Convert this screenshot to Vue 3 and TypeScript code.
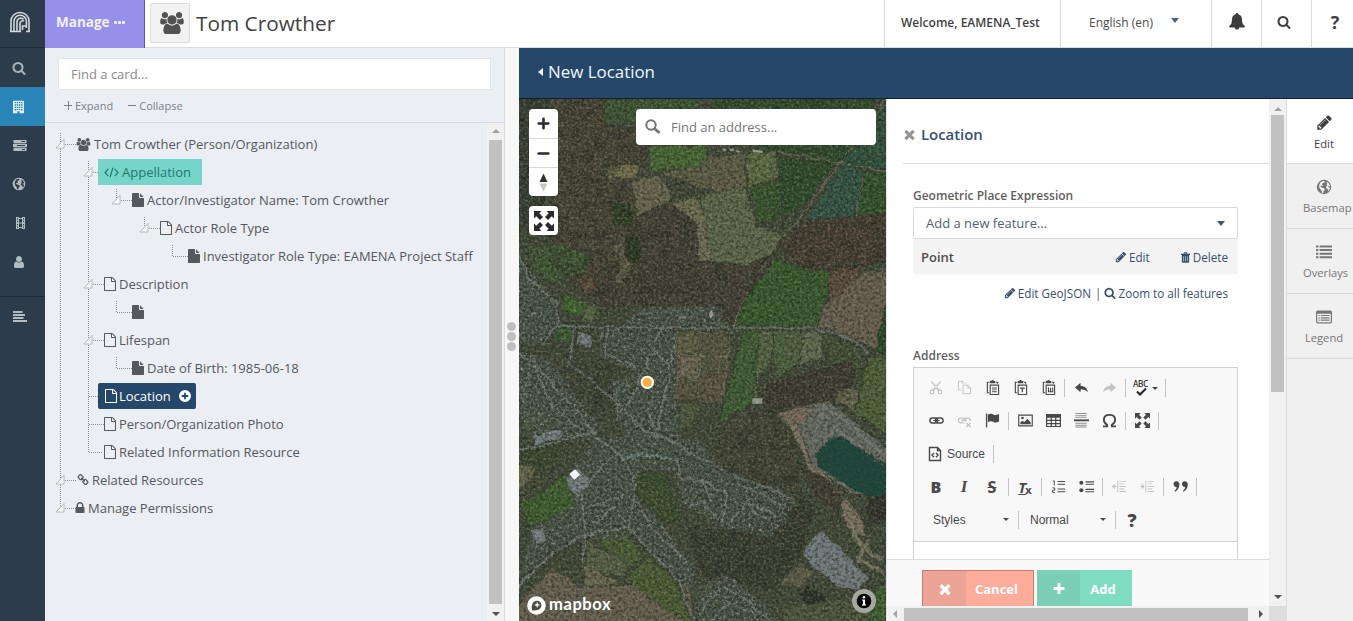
<script setup lang="ts">
interface Glyph { box: string; body: string }
const p = (d: string): string => `<path d="${d}"/>`
const fa = (d: string): Glyph => ({ box: '0 0 1792 1792', body: p(d) })

const glyphs: Record<string, Glyph> = {
  search: fa('M1216 832q0-185-131.5-316.5t-316.5-131.5-316.5 131.5-131.5 316.5 131.5 316.5 316.5 131.5 316.5-131.5 131.5-316.5zm512 832q0 52-38 90t-90 38q-54 0-90-38l-343-342q-179 124-399 124-143 0-273.5-55.5t-225-150-150-225-55.5-273.5 55.5-273.5 150-225 225-150 273.5-55.5 273.5 55.5 225 150 150 225 55.5 273.5q0 220-124 399l343 343q37 37 37 90z'),
  file: fa('M1152 512v-472q22 14 36 28l408 408q14 14 28 36h-472zm-128 32q0 40 28 68t68 28h544v1056q0 40-28 68t-68 28h-1344q-40 0-68-28t-28-68v-1600q0-40 28-68t68-28h800v544z'),
  fileo: fa('M1596 380q28 28 48 76t20 88v1152q0 40-28 68t-68 28h-1344q-40 0-68-28t-28-68v-1600q0-40 28-68t68-28h896q40 0 88 20t76 48zm-444-244v376h376q-10-29-22-41l-313-313q-12-12-41-22zm384 1528v-1024h-416q-40 0-68-28t-28-68v-416h-768v1536h1280z'),
  pencil: fa('M491 1536l91-91-235-235-91 91v107h128v128h107zm523-928q0-22-22-22-10 0-17 7l-542 542q-7 7-7 17 0 22 22 22 10 0 17-7l542-542q7-7 7-17zm-54-192l416 416-832 832h-416v-416zm683 96q0 53-37 90l-166 166-416-416 166-165q36-38 90-38 53 0 91 38l235 234q37 39 37 91z'),
  times: fa('M1490 1322q0 40-28 68l-136 136q-28 28-68 28t-68-28l-294-294-294 294q-28 28-68 28t-68-28l-136-136q-28-28-28-68t28-68l294-294-294-294q-28-28-28-68t28-68l136-136q28-28 68-28t68 28l294 294 294-294q28-28 68-28t68 28l136 136q28 28 28 68t-28 68l-294 294 294 294q28 28 28 68z'),
  plus: fa('M1600 736v192q0 40-28 68t-68 28h-416v416q0 40-28 68t-68 28h-192q-40 0-68-28t-28-68v-416h-416q-40 0-68-28t-28-68v-192q0-40 28-68t68-28h416v-416q0-40 28-68t68-28h192q40 0 68 28t28 68v416h416q40 0 68 28t28 68z'),
  lock: fa('M640 768h512v-192q0-106-75-181t-181-75-181 75-75 181v192zm832 96v576q0 40-28 68t-68 28h-960q-40 0-68-28t-28-68v-576q0-40 28-68t68-28h32v-192q0-184 132-316t316-132 316 132 132 316v192h32q40 0 68 28t28 68z'),
  link: fa('M1520 1216q0-40-28-68l-208-208q-28-28-68-28-42 0-72 32 3 3 19 18.5t21.5 21.5 15 19 13 25.5 3.5 27.5q0 40-28 68t-68 28q-15 0-27.5-3.5t-25.5-13-19-15-21.5-21.5-18.5-19q-33 31-33 73 0 40 28 68l206 207q27 27 68 27 40 0 68-26l147-146q28-28 28-67zm-703-705q0-40-28-68l-206-207q-28-28-68-28-39 0-68 27l-147 146q-28 28-28 67 0 40 28 68l208 208q27 27 68 27 42 0 72-31-3-3-19-18.5t-21.5-21.5-15-19-13-25.5-3.5-27.5q0-40 28-68t68-28q15 0 27.5 3.5t25.5 13 19 15 21.5 21.5 18.5 19q33-31 33-73zm895 705q0 120-85 203l-147 146q-83 83-203 83-121 0-204-85l-206-207q-83-83-83-203 0-123 88-209l-88-88q-86 88-208 88-120 0-204-84l-208-208q-84-84-84-204t85-203l147-146q83-83 203-83 121 0 204 85l206 207q83 83 83 203 0 123-88 209l88 88q86-88 208-88 120 0 204 84l208 208q84 84 84 204z'),
  user: fa('M1536 1399q0 109-62.5 187t-150.5 78h-854q-88 0-150.5-78t-62.5-187q0-85 8.5-160.5t31.5-152 58.5-131 94-89 134.5-34.5q131 128 313 128t313-128q76 0 134.5 34.5t94 89 58.5 131 31.5 152 8.5 160.5zm-256-887q0 159-112.5 271.5t-271.5 112.5-271.5-112.5-112.5-271.5 112.5-271.5 271.5-112.5 271.5 112.5 112.5 271.5z'),
  users: { box: '64 0 1920 1792', body: p('M657 896q-162 5-265 128h-134q-82 0-138-40.5t-56-118.5q0-353 124-353 6 0 43.5 21t97.5 42.5 119 21.5q67 0 133-23-5 37-5 66 0 159 81 256zm1071 637q0 120-73 189.5t-194 69.5h-874q-121 0-194-69.5t-73-189.5q0-53 3.5-103.5t14-109 26.5-108.5 43-97.5 62-81 85.5-53.5 111.5-20q10 0 43 21.5t73 48 107 48 135 21.5 135-21.5 107-48 73-48 43-21.5q61 0 111.5 20t85.5 53.5 62 81 43 97.5 26.5 108.5 14 109 3.5 103.5zm-1024-1277q0 106-75 181t-181 75-181-75-75-181 75-181 181-75 181 75 75 181zm704 384q0 159-112.5 271.5t-271.5 112.5-271.5-112.5-112.5-271.5 112.5-271.5 271.5-112.5 271.5 112.5 112.5 271.5zm576 225q0 78-56 118.5t-138 40.5h-134q-103-123-265-128 81-97 81-256 0-29-5-66 66 23 133 23 59 0 119-21.5t97.5-42.5 43.5-21q124 0 124 353zm-128-609q0 106-75 181t-181 75-181-75-75-181 75-181 181-75 181 75 75 181z') },
  code: { box: '0 0 16 12', body: '<path d="M4.500 2 1 6l3.500 4M11.500 2 15 6l-3.500 4M9.500.8l-3 10.400" fill="none" stroke="currentColor" stroke-width="1.300"/>' },
  globe: { box: '0 0 16 16', body: '<path fill-rule="evenodd" d="M8 .8a7.200 7.200 0 1 0 0 14.400A7.200 7.200 0 0 0 8 .8zM6.300 2.200l1.500-.3 1 .9-.9 1.200-1.300.1-.6 1.300 1 .6-.6.9-1.500-.4-.3 1.300 1.200.9 2.300.5.7 1.300-1.200 1.700-.5 2-1.100-.3-.7-2.600-1.500-1.700-.7-2 .4-2.500L4.500 3.200zM11 2.800l1.700 1.500 1.300 2.500-.4.600-1-.4-.6.6 1 1 .8.2-.3 1.700-1.200 1.700-.6-2.200-1.500-.7-.1-1.600 1.100-1.100-.6-1.100.7-.9-.8-.9z"/>' },
  building: { box: '0 0 13 15', body: '<path fill-rule="evenodd" d="M0 0h13v15H7.800v-2.500H5.200V15H0zM2 1.500v1.700h1.700V1.500zm2.500 0v1.700h1.700V1.500zm2.500 0v1.700h1.700V1.500zm2.500 0v1.700h1.700V1.500zM2 4.300V6h1.700V4.300zm2.500 0V6h1.700V4.300zm2.500 0V6h1.700V4.300zm2.500 0V6h1.700V4.300zM2 7.100v1.700h1.700V7.100zm2.500 0v1.700h1.700V7.100zm2.500 0v1.700h1.700V7.100zm2.500 0v1.700h1.700V7.100zM2 9.900v1.700h1.700V9.900zm2.500 0v1.200h1.700V9.900zm2.500 0v1.200h1.700V9.900zm2.500 0v1.700h1.700V9.900z"/>' },
  server: { box: '0 0 14 11', body: '<path fill-rule="evenodd" d="M.5 0h13v3H.5zM0 4h14v3H0zm.5 4h13v3H.5zM8.500 1v1h3.500V1zM4 5v1h8V5zm5 4v1h3V9z"/><path d="M1 3h12v1H1zm0 4h12v1H1z" opacity=".4"/>' },
  film: { box: '0 0 9 12', body: '<path fill-rule="evenodd" d="M0 0h3v1h3V0h3v12H6v-1H3v1H0zM3 2v3.500h3V2zm0 4.500V10h3V6.500zM1 1.300v1.200h1V1.300zm0 2.500V5h1V3.800zM1 7v1.200h1V7zm0 2.500v1.200h1V9.500zm6-8.200v1.200h1V1.300zm0 2.500V5h1V3.800zM7 7v1.200h1V7zm0 2.500v1.200h1V9.500z"/>' },
  align: { box: '0 0 14 11', body: '<path d="M0 0h9.500v2H0zm0 3h12v2H0zm0 3h10.500v2H0zm0 3h14v2H0z"/>' },
  bell: { box: '0 0 16 17', body: '<path d="M8 0c.8 0 1.300.5 1.200 1.300C12 2 13 4.200 13 6.500c0 3.500 1 5.300 3 6.700 0 .8-.5 1.200-1.200 1.200h-4.600a2.200 2.200 0 0 1-4.400 0H1.200C.5 14.400 0 14 0 13.200c2-1.400 3-3.200 3-6.700C3 4.200 4 2 6.800 1.300 6.700.5 7.200 0 8 0z"/>' },
  trash: { box: '0 0 11 13', body: '<path fill-rule="evenodd" d="M0 2h3l.8-1.800h3.400L8 2h3v1.300h-1V12l-.8 1H1.800L1 12V3.300H0zm4.300 0h2.400l-.3-.7H4.600zM3 5v6h.7V5zm2.200 0v6h.7V5zm2.200 0v6H8V5z"/>' },
  list: { box: '0 0 16 13', body: '<path d="M0 0h2.400v2H0zm3.600 0H16v2H3.600zM0 3.600h2.400v2H0zm3.600 0H16v2H3.600zM0 7.200h2.400v2H0zm3.600 0H16v2H3.600zM0 10.800h2.400v2H0zm3.600 0H16v2H3.600z"/>' },
  listalt: { box: '0 0 16 13', body: '<path fill-rule="evenodd" d="M1.200 0h13.600L16 1.200v10.600L14.800 13H1.200L0 11.800V1.200zM1.200 3.200v8.500h13.600V3.200zM2.500 4.500h1.200v1.100H2.500zm2.200 0h8.800v1.100H4.700zM2.500 6.800h1.200v1.100H2.500zm2.200 0h8.800v1.100H4.700zM2.500 9.100h1.200v1.100H2.500zm2.200 0h8.800v1.100H4.700z"/>' },
  pluscircle: { box: '0 0 12 12', body: '<path fill-rule="evenodd" d="M6 0a6 6 0 1 0 0 12A6 6 0 0 0 6 0zM5.100 2.700h1.800v2.400h2.400v1.800H6.900v2.400H5.100V6.900H2.700V5.100h2.400z"/>' },
  cut: { box: '0 0 16 16', body: '<g fill="none" stroke="currentColor" stroke-width="1.300"><circle cx="3.500" cy="13" r="2"/><circle cx="12.500" cy="13" r="2"/></g><path d="M2 .8 3.800 1.200 12.800 11.300l-2.300 1zM14 .8l-1.800.4L3.200 11.300l2.300 1z"/>' },
  copy: { box: '0 0 16 16', body: '<path d="M4.500 10.500h-3v-9h5l2.500 2.500M6.500 5.500h5l3 3v6h-8zM11.500 5.500v3h3M5.500 1.500v2.500" fill="none" stroke="currentColor"/>' },
  paste: { box: '0 0 16 16', body: '<path d="M4 2.500H2.500v11H4M12 2.500h1.500V4M5.500 5.500h9v10h-9z" fill="none" stroke="currentColor" stroke-width="1.200"/><path d="M5 1h2V0h2v1h2v2.500H5zM7.500 8h5v1h-5zm0 2h5v1h-5zm0 2h5v1h-5z"/>' },
  pastet: { box: '0 0 16 16', body: '<path d="M4 2.500H2.500v11H4M12 2.500h1.500V4M5.500 5.500h9v10h-9z" fill="none" stroke="currentColor" stroke-width="1.200"/><path d="M5 1h2V0h2v1h2v2.500H5zM7.500 8h5v1.300h-1.800V13H9.300V9.300H7.500z"/>' },
  pastew: { box: '0 0 16 16', body: '<path d="M4 2.500H2.500v11H4M12 2.500h1.500V4M5.500 5.500h9v10h-9zM8 8v4.500h4.500V8M10.200 8.500v4" fill="none" stroke="currentColor" stroke-width="1.200"/><path d="M5 1h2V0h2v1h2v2.500H5z"/>' },
  undo: { box: '0 0 16 16', body: '<path d="M7 3v3c4 .2 7 2.300 7.800 7C13 10.500 10.500 10 7 10v3L1 8z"/>' },
  redo: { box: '0 0 16 16', body: '<path d="M9 3v3c-4 .2-7 2.300-7.800 7C3 10.500 5.500 10 9 10v3l6-5z"/>' },
  clink: { box: '0 0 16 16', body: '<g fill="none" stroke="currentColor" stroke-width="1.500"><rect x="1" y="5.300" width="8" height="5.400" rx="2.500"/><rect x="7" y="5.300" width="8" height="5.400" rx="2.500"/><path d="M4.500 8h7" stroke-width="1.200"/></g>' },
  unlink: { box: '0 0 16 16', body: '<g fill="none" stroke="currentColor" stroke-width="1.400"><path d="M8 10.500H4a2.500 2.500 0 0 1 0-5h2.500a2.500 2.500 0 0 1 2.500 2.500M7 8a2.500 2.500 0 0 1 2.500-2.500H12a2.500 2.500 0 0 1 2.300 3M4.500 8h6M10 10.500l4.500 4.500m0-4.500L10 15"/></g>' },
  flag: { box: '0 0 16 16', body: '<path d="M1 .5h1.300v15H1zM3 1.500c3-1.500 5-.5 6.500.3 1.500.6 3 .3 5.500-.8v8c-2.200 1.200-4 1.400-5.500.8C8 9 6 8.300 3 9.800z"/>' },
  image: { box: '0 0 16 16', body: '<path d="M.8 2.300h14.400v11.400H.8z" fill="none" stroke="currentColor" stroke-width="1.200"/><path d="M2.500 12V9.800l2.200-1.600 2 1.500L10.200 6l3.300 4v2z"/><circle cx="4.800" cy="5.300" r="1.400"/>' },
  table: { box: '0 0 16 16', body: '<path fill-rule="evenodd" d="M0 1h16v14H0zm1.300 4v2.300h3.700V5zm5 0v2.300h3.400V5zm4.700 0v2.300h3.700V5zM1.300 8.500v2.200h3.700V8.500zm5 0v2.200h3.400V8.500zm4.700 0v2.200h3.700V8.500zM1.300 12v1.800h3.700V12zm5 0v1.800h3.400V12zm4.700 0v1.800h3.700V12z"/>' },
  hr: { box: '0 0 16 16', body: '<path d="M1.500 0h12v1h-12zm0 2h12v1h-12zm0 2h12v1h-12zm0 6.500h12v1h-12zm0 2h12v1h-12zm0 2h12v1h-12z" opacity=".6"/><path d="M0 6.800h16v2H0z"/>' },
  omega: { box: '0 0 16 16', body: '<path d="M1 14.200h4.500v-1.500C3.500 11.500 2 9.600 2 7.200 2 3.800 4.500 2 8 2s6 1.800 6 5.200c0 2.400-1.500 4.300-3.500 5.500v1.500H15" fill="none" stroke="currentColor" stroke-width="2"/>' },
  max: { box: '0 0 16 16', body: '<path d="M0 0h6L4.200 1.800l3 3-2.400 2.400-3-3L0 6zm16 0v6l-1.800-1.800-3 3-2.400-2.400 3-3L10 0zM0 16v-6l1.800 1.800 3-3 2.400 2.400-3 3L6 16zm16 0h-6l1.800-1.800-3-3 2.400-2.400 3 3L16 10z"/>' },
  source: { box: '0 0 16 16', body: '<path d="M2.500 1.500h8l3 3v10h-11zM10.500 1.500v3h3M7 7l-2 2 2 2.300M9 7l2 2-2 2.300" fill="none" stroke="currentColor" stroke-width="1.400"/>' },
  ol: { box: '0 0 16 16', body: '<path d="M2 2h1.500v5M1.500 9.500H4V12H1.700v2.500H4.200" fill="none" stroke="currentColor"/><path d="M7 2h8v1.100H7zm0 3h8v1.100H7zm0 5h8v1.100H7zm0 3h8v1.100H7z"/>' },
  ul: { box: '0 0 16 16', body: '<circle cx="2.500" cy="4" r="2.200"/><circle cx="2.500" cy="12" r="2.200"/><path d="M7 2.500h9v1.200H7zm0 2.500h9v1.200H7zm0 5.500h9v1.200H7zM7 13h9v1.200H7z"/>' },
  outdent: { box: '0 0 16 16', body: '<path d="M8 2h7v1H8zm0 2.700h5v1H8zm0 2.700h7v1H8zm0 2.700h5v1H8zm0 2.700h7v1H8zM5.700 1.500h1v13h-1zM0 8l3-3v2.400h2v1.200H3V11z"/>' },
  indent: { box: '0 0 16 16', body: '<path d="M8 2h7v1H8zm0 2.700h5v1H8zm0 2.700h7v1H8zm0 2.700h5v1H8zm0 2.700h7v1H8zM5.700 1.500h1v13h-1zM5 8 2 5v2.400H0v1.200h2V11z"/>' },
  quote: { box: '0 0 16 16', body: '<path d="M3.500 2.500a3 3 0 0 1 3.300 3.300c0 3.300-1.800 6.200-4.600 7.700l-.7-.8c1.400-1.200 2.300-2.500 2.400-4.200A2.900 2.900 0 0 1 .6 5.500a3 3 0 0 1 2.900-3zm9 0a3 3 0 0 1 3.300 3.300c0 3.300-1.800 6.200-4.600 7.700l-.7-.8c1.400-1.200 2.300-2.500 2.400-4.200a2.900 2.900 0 0 1-3.300-3 3 3 0 0 1 2.900-3z"/>' },
}

interface TreeRow { label: string; icon: string; indent: number; kind?: string }
const tree: TreeRow[] = [
  { label: 'Tom Crowther (Person/Organization)', icon: 'users', indent: 32 },
  { label: 'Appellation', icon: 'code', indent: 53, kind: 'teal' },
  { label: 'Actor/Investigator Name: Tom Crowther', icon: 'file', indent: 87 },
  { label: 'Actor Role Type', icon: 'fileo', indent: 115 },
  { label: 'Investigator Role Type: EAMENA Project Staff', icon: 'file', indent: 143 },
  { label: 'Description', icon: 'fileo', indent: 59 },
  { label: '', icon: 'file', indent: 87 },
  { label: 'Lifespan', icon: 'fileo', indent: 59 },
  { label: 'Date of Birth: 1985-06-18', icon: 'file', indent: 87 },
  { label: 'Location', icon: 'fileo', indent: 53, kind: 'navy' },
  { label: 'Person/Organization Photo', icon: 'fileo', indent: 59 },
  { label: 'Related Information Resource', icon: 'fileo', indent: 59 },
  { label: 'Related Resources', icon: 'link', indent: 32 },
  { label: 'Manage Permissions', icon: 'lock', indent: 32 },
]
const carets: number[][] = [[15, 14], [43, 42], [71, 70], [99, 98], [43, 154], [43, 210], [15, 350], [15, 378]]

const bar1: string[] = ['cut off', 'copy off', 'paste', 'pastet', 'pastew', '|', 'undo', 'redo off', '|', 'abc', '|']
const bar2: string[] = ['clink', 'unlink off', 'flag', '|', 'image', 'table', 'hr', 'omega', '|', 'max', '|']
const bar4: string[] = ['B', 'I', 'S', '|', 'Tx', '|', 'ol', 'ul', '|', 'outdent off', 'indent off', '|', 'quote', '|']
const letters = ['B', 'I', 'S', 'Tx', 'abc']

const side = [
  { icon: 'search', w: 14, h: 14, cls: 's-search' },
  { icon: 'building', w: 11, h: 14, cls: 's-on' },
  { icon: 'server', w: 14, h: 11, cls: 's-a' },
  { icon: 'globe', w: 14, h: 14, cls: 's-b' },
  { icon: 'film', w: 9, h: 12, cls: 's-c' },
  { icon: 'user', w: 14, h: 14, cls: 's-d' },
  { icon: 'align', w: 14, h: 11, cls: 's-e' },
]
const tabs = [
  { label: 'Edit', icon: 'pencil', w: 17 },
  { label: 'Basemap', icon: 'globe', w: 16 },
  { label: 'Overlays', icon: 'list', w: 16 },
  { label: 'Legend', icon: 'listalt', w: 16 },
]

const fields: [string, string][] = [
  ['90,-426 260,-426 270,-340 400,-330 390,-240 280,-190 350,-180 370,-60 250,200 100,60 110,-150', '#4a4639'],
  ['12,-426 100,-426 110,-200 70,-20 12,-40', '#384134'],
  ['270,-420 560,-425 555,-370 270,-350', '#3d5433'],
  ['600,-426 1090,-426 1020,-280 970,-230 790,-265 580,-300', '#304a2b'],
  ['400,-280 580,-285 570,-220 410,-205', '#486634'],
  ['280,-225 370,-225 365,-190 275,-185', '#75714c'],
  ['350,-180 430,-195 460,-150 470,-120 365,-70', '#68644f'],
  ['440,-200 560,-225 580,-250 690,-260 695,-160 620,-140 540,-160', '#5d5c46'],
  ['695,-260 785,-265 785,-190 700,-160', '#5d6b45'],
  ['790,-250 960,-230 870,-110 800,-70', '#2f4b2a'],
  ['705,-160 790,-180 800,-70 730,-45', '#38522e'],
  ['1060,-310 1113,-410 1130,-210 975,-232', '#2f503c'],
  ['980,-225 1045,-210 1025,-65 860,-40', '#325244'],
  ['1050,-205 1130,-200 1130,-80 1025,-62', '#31522c'],
  ['290,-110 350,-110 350,-50 300,-40', '#2e4228'],
  ['450,-110 550,-125 600,60 550,70 530,0 545,-40', '#6c6b50'],
  ['555,-130 690,-160 725,-40 800,-20 785,30 700,75 600,65 570,-30', '#5d664b'],
  ['370,-75 470,-110 545,-50 550,60 620,72 700,75 785,35 720,150 640,250 560,195 250,200 200,130 320,60', '#474237'],
  ['785,10 870,-60 1130,-80 1130,60 1000,95 860,85', '#4a4035'],
  ['785,55 860,90 945,95 940,150 910,262 655,262 700,160', '#38582d'],
  ['1040,100 1130,90 1120,160 1085,330 910,260 930,190', '#685e51'],
  ['945,95 1030,80 1040,105 940,195', '#5b4b3c'],
  ['1120,160 1130,360 1080,330', '#29472d'],
  ['300,130 320,60 290,20 320,10 345,80 330,135', '#625f4b'],
  ['330,-10 380,-10 370,70 340,60', '#293b24'],
  ['30,20 130,10 225,50 210,100 110,130 60,90', '#405635'],
  ['150,160 220,190 195,228 140,210', '#426330'],
  ['190,115 240,110 240,145 205,160', '#625343'],
  ['115,255 180,262 172,310 125,300', '#3e5c34'],
  ['220,190 250,205 230,250 200,240', '#5a6746'],
  ['485,275 550,275 550,345 485,350', '#5c5e46'],
  ['552,272 640,270 645,395 552,385', '#555541'],
  ['487,352 552,352 550,420 487,415', '#6a6450'],
  ['552,390 640,395 625,480 560,490', '#5a5343'],
  ['487,422 552,422 548,485 490,485', '#565342'],
  ['685,270 735,270 715,480 660,545 615,540 650,400', '#3e5b34'],
  ['735,270 775,275 772,360 720,420', '#546141'],
  ['775,275 860,275 855,370 780,415', '#4f5f3f'],
  ['862,272 925,275 920,355 855,375', '#60684f'],
  ['927,280 1050,320 1040,400 940,360', '#434f36'],
  ['490,490 560,495 520,560 490,580', '#4c573c'],
  ['760,430 1010,360 1020,430 960,480 770,510 730,480', '#423e34'],
  ['970,450 1035,445 1020,515 960,480', '#606048'],
  ['1060,350 1130,360 1130,590 1020,520', '#4e5e38'],
  ['650,520 800,510 850,640 850,760 600,690 600,640', '#464738'],
  ['780,520 860,500 940,480 1130,640 1130,770 1010,760 905,690 870,620 820,560', '#656862'],
  ['785,515 900,500 870,550 820,550', '#76695c'],
  ['820,550 850,548 865,600 885,660 960,740 1040,840 1050,890 1000,870 975,780 880,680', '#7b7063'],
  ['850,670 900,700 990,760 970,830 900,760', '#403c32'],
  ['1060,770 1130,760 1130,830 1050,860', '#33332e'],
  ['955,590 990,595 1140,690 1140,768 1060,768 1000,740 910,680 900,640', '#22473c'],
  ['520,860 640,870 740,860 850,760 900,800 860,940 780,1050 560,1000', '#3c4032'],
  ['920,875 1000,950 1065,1020 1020,1050 965,1035 860,950 890,900', '#717a7c'],
  ['790,1040 850,970 900,1000 860,1040', '#5c5c47'],
  ['850,1060 880,1040 940,1080 880,1095', '#2d2f26'],
  ['800,1100 1130,1060 1130,1160 800,1160', '#4d543d'],
  ['1050,1080 1130,1020 1130,1160 1070,1160', '#405e31'],
  ['20,1080 110,985 200,1040 330,1035 520,1030 545,1160 -10,1160', '#676050'],
  ['215,905 330,960 340,990 320,1010 210,990', '#565e46'],
  ['240,900 340,890 385,950 350,980', '#4a5c34'],
  ['330,1020 400,950 500,1040 530,1160 440,1100', '#4b5b35'],
  ['205,980 330,1030 210,1040', '#6a674f'],
  ['150,700 205,790 150,820 40,855 20,790 100,740', '#3e5d2f'],
  ['-5,620 150,600 120,650 -5,760', '#3a4830'],
  ['20,545 70,510 120,540 40,580', '#47613b'],
  ['-5,670 60,680 50,720 -5,760', '#64664c'],
  ['370,700 450,700 500,850 440,840 360,760', '#3b4c2f'],
]
const woods = [
  '90,-426 260,-426 270,-340 400,-330 390,-240 280,-190 350,-180 370,-60 250,200 100,60 110,-150',
  '370,-75 470,-110 545,-50 550,60 620,72 700,75 785,35 720,150 640,250 560,195 250,200 200,130 320,60',
  '785,10 870,-60 1113,-80 1113,60 1000,95 860,85',
  '760,430 1010,360 1020,430 960,480 770,510 730,480',
  '640,520 800,510 850,640 850,760 600,690 600,640',
  '520,860 640,870 740,860 850,760 900,800 860,940 780,1050 560,1000',
  '160,370 300,370 280,520 230,560 140,440',
  '440,-200 500,-190 560,-150 550,-130 470,-150',
  '12,-426 100,-426 110,-200 70,-20 12,-40',
]
const towns = [
  '12,60 100,150 130,260 60,320 12,300',
  '250,265 480,270 490,600 400,610 340,590 280,430 370,400 260,350',
  '12,330 100,360 260,560 230,600 60,600 12,520',
  '240,590 400,590 560,600 600,680 850,790 770,890 620,860 500,790 480,690 380,690 330,860 200,860 150,720',
  '330,800 400,800 540,980 530,1060 340,870',
  '200,780 380,780 340,890 210,900 100,930 30,1040 12,1000 60,860',
  '540,1050 640,1000 760,1110 780,1143 550,1143',
  '370,200 620,200 620,262 320,262',
]
const streets = [
  'M12,40 40,110 120,190 130,240 80,320', 'M12,340 70,380 130,450 200,530 240,580', 'M160,370 240,430 330,510 380,570 460,600 550,650 650,700 840,780',
  'M120,258 440,264 800,264 900,264 1010,300 1060,340', 'M440,264 400,360 370,430 340,490', 'M12,630 150,600 240,570',
  'M470,330 460,420 440,500 430,570', 'M410,480 400,520 430,590', 'M240,590 320,650 360,720 350,820 340,860', 'M320,655 400,645 490,660 495,720',
  'M340,860 200,890 120,930 12,1040', 'M200,760 210,880 205,970', 'M380,800 400,850 520,970', 'M340,860 420,950 490,1020 540,1143',
  'M210,740 280,660 310,640', 'M560,720 640,770 620,850', 'M700,780 640,850', 'M680,740 820,800', 'M700,790 800,830', 'M710,810 790,860',
  'M500,720 560,720 590,780', 'M520,800 560,780 610,840', 'M560,1110 620,1040 700,1080 760,1143', 'M590,1143 640,1090 720,1120',
  'M180,265 165,360', 'M280,270 270,340 360,380', 'M300,430 310,540', 'M230,800 330,760', 'M40,400 20,500', 'M60,380 110,500 200,570', 'M240,850 300,800', 'M410,340 470,370',
]
const tracks = ['M1113,-420 1040,-320 975,-230 900,-130 840,-50 790,0 720,110 650,262', 'M790,-265 970,-232 1113,-205', 'M725,380 725,490', 'M1010,880 1050,940 1113,1010', 'M600,640 600,690', 'M960,740 1020,850 1010,900', 'M1045,-190 1025,-70', 'M480,270 490,490', 'M650,270 620,490', 'M552,270 555,490', 'M487,350 645,350', 'M487,420 560,422']
</script>

<template>
  <div class="app">
    <nav class="rail">
      <div class="logo">
        <svg width="22" height="22" viewBox="0 0 22 22" fill="none" stroke="#d3d8dc" stroke-width="1.600">
          <path d="M2 20.500V10a9 8.500 0 0 1 18 0v10.500M5 20.500V10.500a6.200 6 0 0 1 12.400-.5v7M8 20.500V11a3.700 3.800 0 0 1 6.500-2.500M11 20.500V12a3 3 0 0 1 4-2M13.500 19V15h4M1 20.500h11M17 20.500h4" />
        </svg>
      </div>
      <div v-for="s in side" :key="s.icon" class="rail-item" :class="s.cls">
        <svg :width="s.w" :height="s.h" :viewBox="glyphs[s.icon].box" fill="currentColor" v-html="glyphs[s.icon].body"></svg>
      </div>
    </nav>

    <div class="main">
      <header class="top">
        <div class="manage">Manage <i></i><i></i><i></i></div>
        <div class="badge"><svg width="24" height="22" :viewBox="glyphs.users.box" fill="#525252" v-html="glyphs.users.body"></svg></div>
        <h1>Tom Crowther</h1>
        <div class="cell welcome">Welcome, EAMENA_Test</div>
        <div class="cell lang"><span>English (en)</span><b class="tri"></b></div>
        <div class="cell ico"><svg width="16" height="17" :viewBox="glyphs.bell.box" fill="#3d3d3d" v-html="glyphs.bell.body"></svg></div>
        <div class="cell ico sr"><svg width="14" height="14" :viewBox="glyphs.search.box" fill="#3d3d3d" v-html="glyphs.search.body"></svg></div>
        <div class="cell ico q">?</div>
      </header>

      <div class="body">
        <aside class="cards">
          <div class="find">Find a card...</div>
          <div class="tools"><i class="pl"></i><span>Expand</span><i class="mi"></i><span>Collapse</span></div>
          <div class="tree-wrap">
            <div class="tree">
              <svg class="lines" width="440" height="410" viewBox="0 0 440 410">
                <g fill="none" stroke="#8b9096" stroke-width="1" stroke-dasharray="1 1">
                  <path d="M15.500 10V385M43.500 38V329.500H58M71.500 66V77M99.500 94V105M127.500 122V133.500H143M71.500 178V189.500H87M71.500 234V245.500H87" />
                  <path d="M20 21.500H31M48 49.500H53M76 77.500H87M104 105.500H115M48 161.500H59M48 217.500H59M44 273.500H53M44 301.500H59M20 357.500H31M20 385.500H31" />
                </g>
                <path v-for="(c, i) in carets" :key="i" :d="`M${c[0] - 4} ${c[1] + 11}L${c[0] + 4} ${c[1] + 2.500}V${c[1] + 11}Z`" fill="#fff" stroke="#adb1b5" stroke-width=".9" />
              </svg>
              <div v-for="(r, i) in tree" :key="i" class="row">
                <span class="pad" :style="{ width: r.indent + 'px' }"></span>
                <span class="node" :class="[r.kind, r.icon]">
                  <svg class="nic" :viewBox="glyphs[r.icon].box" fill="currentColor" v-html="glyphs[r.icon].body"></svg>
                  <span>{{ r.label }}</span>
                  <svg v-if="r.kind === 'navy'" class="pc" width="12" height="12" viewBox="0 0 12 12" fill="#fff" v-html="glyphs.pluscircle.body"></svg>
                </span>
              </div>
            </div>
            <div class="vbar left"><i class="up"></i><b></b><i class="down"></i></div>
          </div>
        </aside>
        <div class="split"><i></i><i></i><i></i></div>

        <section class="work">
          <div class="bar"><b></b>New Location</div>
          <div class="panes">
            <div class="map">
              <svg class="sat" width="367" height="522" viewBox="12 -423 1101 1566" preserveAspectRatio="none">
                <defs>
                  <filter id="rough" x="0" y="0" width="100%" height="100%" color-interpolation-filters="sRGB">
                    <feTurbulence type="fractalNoise" baseFrequency=".03" numOctaves="4" seed="3" result="n" />
                    <feDisplacementMap in="SourceGraphic" in2="n" scale="18" xChannelSelector="R" yChannelSelector="G" />
                  </filter>
                  <filter id="wood" x="0" y="0" width="100%" height="100%" color-interpolation-filters="sRGB">
                    <feTurbulence type="fractalNoise" baseFrequency=".03" numOctaves="5" seed="8" />
                    <feColorMatrix values="0 0 0 0 .17  0 0 0 0 .18  0 0 0 0 .14  1.600 0 0 0 -.68" result="d" />
                    <feComposite in="d" in2="SourceAlpha" operator="in" />
                  </filter>
                  <filter id="town" x="0" y="0" width="100%" height="100%" color-interpolation-filters="sRGB">
                    <feTurbulence type="fractalNoise" baseFrequency=".12" numOctaves="3" seed="21" />
                    <feColorMatrix values="0 0 0 0 .56  0 0 0 0 .6  0 0 0 0 .57  2.600 0 0 0 -1.380" result="d" />
                    <feComposite in="d" in2="SourceAlpha" operator="in" />
                  </filter>
                  <filter id="shade" x="0" y="0" width="100%" height="100%" color-interpolation-filters="sRGB">
                    <feTurbulence type="fractalNoise" baseFrequency=".11" numOctaves="3" seed="5" />
                    <feColorMatrix values="0 0 0 0 .08  0 0 0 0 .1  0 0 0 0 .06  1.300 0 0 0 -.52" />
                  </filter>
                  <filter id="glint" x="0" y="0" width="100%" height="100%" color-interpolation-filters="sRGB">
                    <feTurbulence type="fractalNoise" baseFrequency=".13" numOctaves="3" seed="14" />
                    <feColorMatrix values="0 0 0 0 .7  0 0 0 0 .72  0 0 0 0 .62  0 .9 0 0 -.42" />
                  </filter>
                </defs>
                <rect x="12" y="-426" width="1101" height="1570" fill="#424838" />
                <g filter="url(#rough)">
                  <rect x="-20" y="-450" width="1160" height="1620" fill="#424838" />
                  <polygon v-for="(f, i) in fields" :key="i" :points="f[0]" :fill="f[1]" stroke="#2f3827" stroke-width="2.500" stroke-opacity=".5" />
                  <polygon v-for="(t, i) in towns" :key="'t' + i" :points="t" fill="#465045" fill-opacity=".8" />
                  <g fill="none" stroke-linejoin="round">
                    <path v-for="(s, i) in streets" :key="'a' + i" :d="s" stroke="#2f3a2c" stroke-width="22" stroke-opacity=".4" />
                    <path v-for="(s, i) in streets" :key="'b' + i" :d="s" stroke="#737a73" stroke-width="15" stroke-dasharray="5 7" stroke-opacity=".5" />
                    <path v-for="(s, i) in streets" :key="'c' + i" :d="s" stroke="#6f7670" stroke-width="4.500" />
                    <path v-for="(s, i) in tracks" :key="'d' + i" :d="s" stroke="#77765f" stroke-width="3.500" stroke-opacity=".7" />
                  </g>
                  <path d="M330 655 380 640 470 655" stroke="#5b7771" stroke-width="8" stroke-opacity=".8" fill="none" />
                  <path d="M50 590 135 570 145 590 65 612zM190 275 230 290 225 325 190 310zM150 720 190 690 225 720 185 770zM50 870 80 865 95 900 65 910z" fill="#747c80" />
                  <path d="M900 560 930 500 1010 560 1100 640M890 600 930 590 960 570 1040 620" stroke="#85857e" stroke-width="12" fill="none" opacity=".45" />
                  <path d="M1010 860 1040 920 1100 960M1060 900 1030 960 1110 1000" stroke="#8d8670" stroke-width="12" fill="none" opacity=".65" />
                </g>
                <g filter="url(#wood)"><polygon v-for="(w, i) in woods" :key="i" :points="w" fill="#000" /></g>
                <g filter="url(#town)"><polygon v-for="(w, i) in towns" :key="i" :points="w" fill="#000" /></g>
                <rect x="12" y="-426" width="1101" height="1570" filter="url(#shade)" />
                <rect x="12" y="-426" width="1101" height="1570" filter="url(#glint)" />
                <path d="M957 597 990 602 1113 694 1110 762 1060 766 1000 738 915 676 908 642z" fill="#1f4439" fill-opacity=".75" />
                <g fill="#b1b4a8" opacity=".7">
                  <path d="M620 -272l8-4 7 5-5 6zM642 -272l14-3 2 7-12 2zM664 -270l12 2-3 6-9-2zM712 -272l32 4-2 7-28-2zM712 475h30v16h-30zM582 220l8-10 6 14-10 12z" />
                  <path d="M490 228h22v8h-22z" opacity=".6" />
                </g>
                <path d="M163 702 180 688 195 704 178 719z" fill="#f2f5f3" />
                <circle cx="397" cy="427" r="20" fill="#fff" /><circle cx="397" cy="427" r="14" fill="#f9ae40" />
              </svg>
              <div class="ctl">
                <span><svg width="13" height="13" viewBox="0 0 13 13"><path d="M6.500 1.700v9.600M1.700 6.500h9.600" stroke="#2b2b2b" stroke-width="2.600" stroke-linecap="round" /></svg></span>
                <span><svg width="13" height="13" viewBox="0 0 13 13"><path d="M1.700 6.500h9.600" stroke="#2b2b2b" stroke-width="2.600" stroke-linecap="round" /></svg></span>
                <span><svg width="9" height="19" viewBox="0 0 9 19"><path d="M.5 9 4.500.5 8.500 9z" fill="#333" /><path d="M.5 10.500 4.500 18.500 8.500 10.500z" fill="#c6c6c6" /></svg></span>
              </div>
              <div class="full"><svg width="20" height="20" :viewBox="glyphs.max.box" fill="#2b2b2b" v-html="glyphs.max.body"></svg></div>
              <div class="geo">
                <svg width="16" height="16" viewBox="0 0 16 16" fill="none" stroke="#737373"><circle cx="6" cy="6" r="4.700" stroke-width="2" /><path d="M9.700 9.700 14.500 14" stroke-width="2.800" /></svg>
                <span>Find an address...</span>
              </div>
              <div class="mb">
                <svg width="19" height="19" viewBox="0 0 19 19"><circle cx="9.500" cy="9.500" r="9.300" fill="#fff" /><path d="M5 14.200C4 9 6 4.700 10 4.700a4.500 4.500 0 0 1 4.400 4.600c0 4-4.400 6-9.400 4.900z" fill="#4a4c40" /><path d="M10.200 5.800l.8 2.300 2.300.8-2.300.9-.8 2.300-.9-2.300L7 8.900l2.300-.8z" fill="#fff" /></svg>
                <span>mapbox</span>
              </div>
              <svg class="info" width="24" height="24" viewBox="0 0 24 24"><circle cx="12" cy="12" r="12" fill="#a4a99f" /><circle cx="12" cy="12" r="7.300" fill="#000" /><circle cx="12" cy="8.300" r="1.300" fill="#fff" /><path d="M10.200 10.500h2.800v4.700h1v1.300h-4v-1.300h1v-3.400h-.8z" fill="#fff" /></svg>
            </div>

            <div class="side">
              <div class="side-row">
                <div class="formcol">
                  <div class="form">
                    <div class="fhead"><svg width="15" height="15" :viewBox="glyphs.times.box" fill="#959595" v-html="glyphs.times.body"></svg><span>Location</span></div>
                    <label class="geom">Geometric Place Expression</label>
                    <div class="select"><span>Add a new feature...</span><b></b></div>
                    <div class="point">
                      <strong>Point</strong>
                      <a class="e"><svg width="12" height="12" :viewBox="glyphs.pencil.box" fill="currentColor" v-html="glyphs.pencil.body"></svg>Edit</a>
                      <a class="d"><svg width="9" height="11" :viewBox="glyphs.trash.box" fill="currentColor" v-html="glyphs.trash.body"></svg>Delete</a>
                    </div>
                    <div class="links">
                      <svg width="12" height="12" :viewBox="glyphs.pencil.box" fill="currentColor" v-html="glyphs.pencil.body"></svg><span>Edit GeoJSON</span><em>|</em>
                      <svg width="12" height="12" :viewBox="glyphs.search.box" fill="currentColor" v-html="glyphs.search.body"></svg><span>Zoom to all features</span>
                    </div>
                    <label class="addr">Address</label>
                    <div class="editor">
                      <div class="ck">
                        <div v-for="(bar, k) in [bar1, bar2, ['src', '|'], bar4]" :key="k" class="ckrow">
                          <template v-for="(t, i) in bar" :key="i">
                            <i v-if="t === '|'" class="sep"></i>
                            <span v-else-if="t === 'src'" class="srcbtn"><svg width="16" height="16" viewBox="0 0 16 16" v-html="glyphs.source.body"></svg>Source</span>
                            <span v-else-if="letters.includes(t)" class="btn" :class="'l-' + t">
                              <template v-if="t === 'Tx'"><u>T</u><sub>x</sub></template>
                              <template v-else-if="t === 'abc'"><small>ABC</small><svg width="11" height="8" viewBox="0 0 11 8" fill="none" stroke="#222" stroke-width="2"><path d="M1 3.500 4 6.500 10 .5" /></svg><b class="dd"></b></template>
                              <template v-else>{{ t }}</template>
                            </span>
                            <span v-else class="btn" :class="{ off: t.endsWith('off') }"><svg :width="t === 'cut off' ? 14 : 15" height="15" viewBox="0 0 16 16" fill="currentColor" v-html="glyphs[t.split(' ')[0]].body"></svg></span>
                          </template>
                        </div>
                        <div class="ckrow">
                          <span class="combo st">Styles<b class="dd"></b></span><i class="sep"></i>
                          <span class="combo no">Normal<b class="dd"></b></span><i class="sep"></i>
                          <span class="btn help">?</span>
                        </div>
                      </div>
                    </div>
                  </div>
                  <div class="foot">
                    <div class="fbtn cancel"><span><svg width="16" height="16" :viewBox="glyphs.times.box" fill="#fff" v-html="glyphs.times.body"></svg></span><b>Cancel</b></div>
                    <div class="fbtn add"><span><svg width="14" height="14" :viewBox="glyphs.plus.box" fill="#fff" v-html="glyphs.plus.body"></svg></span><b>Add</b></div>
                  </div>
                </div>
                <div class="vbar right"><i class="up"></i><b></b><i class="down"></i></div>
              </div>
              <div class="hbar"><i class="lf"></i><b></b><i class="rt"></i><em></em></div>
            </div>

            <div class="tabs">
              <div v-for="(t, i) in tabs" :key="t.label" class="tab" :class="{ on: i === 0 }">
                <svg :width="t.w" :height="t.w" :viewBox="glyphs[t.icon].box" fill="currentColor" v-html="glyphs[t.icon].body"></svg>
                <span>{{ t.label }}</span>
              </div>
            </div>
          </div>
        </section>
      </div>
    </div>
  </div>
</template>

<style>
body { margin: 0; overflow: hidden; }
</style>

<style scoped>
* { box-sizing: border-box; }
.app { width: 1353px; height: 621px; display: flex; overflow: hidden; background: #fff; font: 13px/18px "Open Sans", sans-serif; color: #55595d; white-space: nowrap; }
svg { display: block; flex: none; }
i, em { font-style: normal; flex: none; }
.rail { width: 45px; flex: none; background: #2d3c4b; color: #b4bcc3; }
.logo { height: 48px; border-bottom: 1px solid #1f2a36; display: flex; justify-content: center; padding: 11px 5px 0 0; }
.rail-item { display: flex; justify-content: center; align-items: center; padding-right: 7px; height: 39px; }
.s-search { color: #a9b1b8; }
.s-on { background: #2984b8; color: #e3f1f8; padding-right: 8px; }
.s-a { padding-right: 5px; height: 38px; }
.s-b { height: 40px; }
.s-c { height: 37px; padding-right: 5px; }
.s-d { height: 41px; }
.s-e { margin-top: 14px; border-top: 1px solid #1d2833; height: 40px; padding-right: 5px; }

.main { flex: 1; min-width: 0; display: flex; flex-direction: column; }
.top { height: 48px; flex: none; display: flex; border-bottom: 1px solid #dcdcdc; background: #fff; }
.manage { width: 100px; height: 48px; background: #9591eb; border-right: 1px solid #5d5a92; color: #f1f0fd; font-weight: 700; font-size: 13.5px; display: flex; align-items: center; padding: 0 0 4px 11px; flex: none; }
.manage i { width: 3px; height: 3px; border-radius: 1px; background: #f1f0fd; margin-right: 1px; }
.manage i:first-of-type { margin-left: 4px; }
.badge { width: 40px; height: 40px; margin: 3px 0 0 5px; border: 1px solid #dcdcdc; border-radius: 2px; background: #f2f2f2; display: flex; align-items: center; justify-content: center; padding-left: 3px; flex: none; }
h1 { margin: 0 0 0 6px; font-weight: 400; font-size: 20.8px; line-height: 46px; color: #424242; flex: 1; }
.cell { border-left: 1px solid #dcdcdc; height: 47px; display: flex; align-items: center; flex: none; color: #3f3f3f; }
.welcome { width: 176px; padding: 0 0 2px 16px; font-size: 12px; font-weight: 600; }
.lang { width: 151px; padding: 0 0 2px 28px; font-size: 12px; color: #4c4c4c; }
.tri { border: 4px solid transparent; border-top: 5px solid #4b6384; border-bottom: 0; margin: -4px 0 0 18px; }
.ico { width: 50px; justify-content: center; padding-bottom: 4px; }
.ico:last-child { width: 42px; }
.sr { padding-right: 5px; }
.ico.q { font-weight: 700; font-size: 18px; padding: 0 0 4px 5px; }

.body { flex: 1; display: flex; min-height: 0; }
.cards { width: 460px; background: #ebeef3; border-right: 1px solid #d9dce0; display: flex; flex-direction: column; flex: none; }
.find { margin: 10px 13px 0 13px; height: 32px; border: 1px solid #e1e5ea; background: #fff; font-size: 13px; line-height: 30px; padding-left: 12px; color: #8b8b8b; }
.tools { height: 32px; flex: none; display: flex; align-items: center; padding: 0 0 1px 19px; font-size: 11px; color: #7b8288; }
.tools span { margin-left: 3px; }
.pl, .mi { width: 8px; height: 1px; background: #7b8288; position: relative; }
.pl::after { content: ""; position: absolute; left: 3.5px; top: -4px; width: 1px; height: 9px; background: #7b8288; }
.mi { margin-left: 15px; }
.tree-wrap { border-top: 1px solid #d9dde3; flex: 1; display: flex; min-height: 0; }
.tree { position: relative; flex: 1; padding-top: 7px; overflow: hidden; }
.lines { position: absolute; left: 0; top: 0; }
.row { height: 28px; display: flex; align-items: center; }
.pad { flex: none; }
.node { display: flex; align-items: center; height: 26px; position: relative; }
.nic { width: 14px; height: 14px; margin: 0 2px 0 -1px; }
.users .nic { width: 15px; height: 13px; margin: 0 3px 0 -1px; }
.link .nic { width: 12px; margin: 0 3px 0 0; }
.lock .nic { width: 14px; height: 14px; margin: 0 1px 0 -4px; }
.teal { background: #76d5c8; color: #1c7a6e; padding: 0 11px 0 6px; }
.teal .nic { width: 15px; height: 11px; margin: 0 3px 0 0; }
.navy { background: #25476a; color: #fff; border-radius: 2px; padding: 0 5px 0 6px; }
.navy .nic { margin-left: 0; margin-right: 1px; }
.pc { margin-left: 8px; }
.vbar { background: #f1f1f1; display: flex; flex-direction: column; align-items: center; flex: none; }
.vbar b { background: #c1c1c1; width: 13px; }
.left { width: 17px; }
.left b { height: 464px; margin-top: 7px; }
.up { border: 4px solid transparent; border-bottom: 4px solid #a3a3a3; border-top: 0; margin-top: 6px; }
.down { border: 4px solid transparent; border-top: 4px solid #505050; border-bottom: 0; margin-top: 8px; }
.split { width: 14px; background: #f7f7f7; flex: none; display: flex; flex-direction: column; align-items: center; padding: 274px 2px 0 0; }
.split i { width: 9px; height: 9px; border-radius: 50%; background: #bfbfbf; margin-bottom: 1px; }

.work { flex: 1; min-width: 0; display: flex; flex-direction: column; }
.bar { height: 51px; flex: none; background: #25476a; border-bottom: 1px solid #10202f; color: #f4f7fa; font-size: 16.9px; display: flex; align-items: center; padding: 0 0 2px 19px; }
.bar b { border: 4px solid transparent; border-right: 5px solid #f4f7fa; border-left: 0; margin-right: 5px; }
.panes { flex: 1; display: flex; min-height: 0; }
.map { position: relative; width: 367px; height: 522px; flex: none; overflow: hidden; }
.ctl { position: absolute; left: 10px; top: 10px; width: 29px; height: 87px; background: #fff; border-radius: 4px; }
.ctl span { height: 29px; display: flex; align-items: center; justify-content: center; }
.ctl span + span { border-top: 1px solid #d6d6d6; }
.full { position: absolute; left: 10px; top: 107px; width: 29px; height: 29px; background: #fff; border-radius: 4px; display: flex; align-items: center; justify-content: center; }
.geo { position: absolute; left: 117px; top: 10px; width: 240px; height: 36px; background: #fff; border-radius: 4px; display: flex; align-items: center; padding-left: 9px; color: #757575; }
.geo span { margin-left: 10px; }
.mb { position: absolute; left: 8px; bottom: 6px; display: flex; align-items: center; color: #fff; font: 700 16.5px/19px Lato, sans-serif; }
.mb span { margin: -2px 0 0 3px; letter-spacing: .6px; }
.info { position: absolute; right: 10px; bottom: 8px; }

.side { width: 400px; flex: none; display: flex; flex-direction: column; border-left: 1px solid #e4e4e4; }
.side-row { flex: 1; display: flex; min-height: 0; }
.formcol { width: 382px; display: flex; flex-direction: column; }
.form { flex: 1; min-height: 0; overflow: hidden; padding: 0 31px 0 26px; }
.fhead { height: 65px; border-bottom: 1px solid #dcdcdc; margin: 0 -31px 0 -10px; display: flex; align-items: center; padding-top: 6px; font-weight: 600; color: #36506f; }
.fhead svg { margin-left: -1px; }
.fhead span { margin-left: 4px; font-size: 14.9px; }
label { display: block; font-size: 12px; font-weight: 600; color: #5e5e5e; }
.geom { margin-top: 23px; height: 20px; }
.select { height: 32px; border: 1px solid #d9d9d9; border-radius: 2px; display: flex; align-items: center; justify-content: space-between; padding: 0 12px; color: #55606f; }
.select b { border: 4px solid transparent; border-top: 5px solid #44566b; border-bottom: 0; }
.point { height: 35px; background: #f4f4f4; display: flex; align-items: center; padding: 1px 10px 0 8px; color: #35506f; font-size: 11.7px; }
.point strong { font-size: 13px; font-weight: 600; color: #4c4c4c; flex: 1; }
.point a { display: flex; align-items: center; }
.point .e svg { margin-right: 2px; }
.d { margin-left: 31px; }
.d svg { margin-right: 3px; }
.links { margin: 10px 10px 0 0; height: 18px; display: flex; align-items: center; justify-content: flex-end; font-size: 11.7px; color: #35506f; }
.links span { margin-left: 2px; }
.links em { margin: 0 3px 0 4px; color: #555; }
.addr { margin-top: 45px; height: 20px; }
.editor { border: 1px solid #d1d1d1; height: 230px; }
.ck { height: 174px; background: #f8f8f8; border-bottom: 1px solid #d1d1d1; padding: 3px 8px; color: #484848; }
.ckrow { height: 33px; display: flex; align-items: center; font: 12px/16px "Liberation Sans", sans-serif; }
.btn { width: 28px; height: 28px; display: flex; align-items: center; justify-content: center; flex: none; position: relative; }
.off { color: #c3c3c3; }
.sep { width: 1px; height: 18px; background: #c3c3c3; margin: 0 2px; }
.srcbtn { width: 69px; display: flex; align-items: center; padding-left: 5px; font-size: 12px; }
.srcbtn svg { margin-right: 4px; fill: currentColor; }
.l-B { font: 800 16px/16px "Open Sans", sans-serif; }
.l-I { font: italic 700 17px/16px "Liberation Serif", serif; }
.l-S { font: 700 16px/16px "Open Sans", sans-serif; text-decoration: line-through; }
.l-Tx { font: italic 700 15px/16px "Open Sans", sans-serif; }
.l-Tx sub { font: 700 11px/10px "Open Sans", sans-serif; margin: 7px 0 0 -1px; }
.l-abc { width: 35px; flex-direction: column; align-items: flex-start; padding-left: 5px; }
.l-abc small { font: 9px/8px "DejaVu Sans Mono", monospace; color: #111; letter-spacing: -.4px; }
.l-abc svg { margin-left: 3px; }
.dd { border: 3px solid transparent; border-top: 3px solid #484848; border-bottom: 0; }
.l-abc .dd { position: absolute; left: 24px; top: 13px; }
.combo { display: flex; align-items: center; justify-content: space-between; flex: none; }
.st { width: 94px; padding: 0 7px 0 11px; }
.no { width: 92px; padding: 0 7px 0 9px; }
.help { font: 800 18px/18px "Open Sans", sans-serif; }
.foot { height: 47px; flex: none; background: #f9f9f9; border-top: 1px solid #dcdcdc; padding: 10px 0 0 35px; display: flex; gap: 3px; overflow: hidden; }
.fbtn { height: 40px; display: flex; color: #fff; flex: none; }
.fbtn span { width: 43px; display: flex; align-items: center; justify-content: center; background: rgba(90, 100, 100, .1); padding-bottom: 2px; }
.fbtn b { flex: 1; text-align: center; line-height: 37px; font-size: 13px; padding-right: 6px; }
.cancel { width: 112px; background: #fdac9c; border: 1px solid #cf7b6c; }
.add { width: 95px; background: #80dcc1; }
.add b { line-height: 39px; }
.right { width: 17px; }
.right b { height: 277px; margin-top: 4px; }
.right .up { margin-top: 8px; }
.right .down { margin-top: auto; margin-bottom: 7px; }
.hbar { height: 15px; flex: none; background: #f1f1f1; display: flex; align-items: center; }
.hbar b { width: 344px; height: 13px; margin: 2px 0 0 7px; background: #c1c1c1; }
.lf { border: 4px solid transparent; border-right: 4px solid #a3a3a3; border-left: 0; margin-left: 6px; }
.rt { border: 4px solid transparent; border-left: 4px solid #505050; border-right: 0; margin-left: 11px; }
.hbar em { width: 17px; height: 15px; background: #dcdcdc; margin-left: auto; }
.tabs { flex: 1; background: #f0f0f0; border-left: 1px solid #dcdcdc; overflow: hidden; }
.tab { width: 100%; height: 65px; border-bottom: 1px solid #d9d9d9; display: flex; flex-direction: column; align-items: flex-start; padding: 15px 0 0 16px; font-size: 11.2px; color: #767676; }
.tab svg { margin-left: 13px; }
.tab span { margin-top: 4px; line-height: 17px; width: 42px; text-align: center; }
.on { background: #fff; color: #3f3f3f; padding-top: 15px; }
</style>
